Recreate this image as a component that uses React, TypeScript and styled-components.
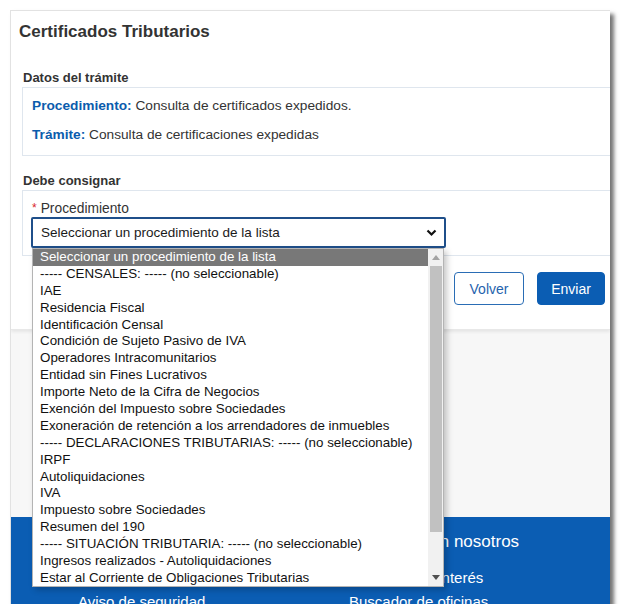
import React from "react";
import styled, { createGlobalStyle } from "styled-components";

const Global = createGlobalStyle`
  html, body { margin: 0; padding: 0; background: #ffffff; }
  body { font-family: "Liberation Sans", Arial, sans-serif; color: #333333; }
`;

const Frame = styled.div`
  position: relative;
  margin: 10px 0 0 10px;
  width: 600px;
  height: 594px;
  border-top: 1px solid #e2e2e2;
  border-left: 1px solid #e2e2e2;
  box-sizing: border-box;
  overflow: hidden;
  display: flex;
  flex-direction: column;
  background: #f7f7f7;
  box-shadow: 4px 4px 4px rgba(0, 0, 0, 0.55);
`;

const Card = styled.div`
  position: relative;
  z-index: 1;
  flex-shrink: 0;
  background: #ffffff;
  height: 319px;
  box-sizing: border-box;
  padding: 11px 5px 0 8px;
  display: flex;
  flex-direction: column;
  box-shadow: 0 2px 3px rgba(0, 0, 0, 0.07);
  border-bottom: 1px solid #e8e8e8;
`;

const Title = styled.h1`
  margin: 0;
  font-size: 17px;
  line-height: 20px;
  font-weight: bold;
  color: #333333;
`;

const Section = styled.section<{ $top: number }>`
  margin-top: ${(p) => p.$top}px;
  padding-left: 3px;
  display: flex;
  flex-direction: column;
`;

const SectionTitle = styled.h2`
  margin: 0 0 1px 1px;
  font-size: 13px;
  line-height: 16px;
  font-weight: bold;
  color: #333333;
`;

const Box = styled.div<{ $pad: string; $gap: number }>`
  border: 1px solid #dfe6ee;
  border-right: none;
  margin-right: -40px;
  padding: ${(p) => p.$pad};
  display: flex;
  flex-direction: column;
  gap: ${(p) => p.$gap}px;
  background: #ffffff;
`;

const InfoRow = styled.div`
  font-size: 13.7px;
  line-height: 16px;
  color: #333333;
`;

const InfoKey = styled.span`
  color: #0b5cad;
  font-weight: bold;
`;

const FieldLabel = styled.label`
  margin-left: 1px;
  font-size: 13.8px;
  line-height: 16px;
  color: #333333;
`;

const Required = styled.span`
  color: #d9262c;
  font-size: 12px;
  margin-right: 4px;
  vertical-align: 1px;
`;

const SelectBox = styled.div`
  width: 415px;
  height: 31px;
  box-sizing: border-box;
  border: 2px solid #1f4f8a;
  border-radius: 2px;
  display: flex;
  align-items: center;
  justify-content: space-between;
  padding: 0 7px 0 8px;
  font-size: 13.5px;
  color: #1a1a1a;
  background: #ffffff;
`;

const Buttons = styled.div`
  margin-top: 16px;
  display: flex;
  justify-content: flex-end;
  gap: 13px;
`;

const Button = styled.button<{ $primary?: boolean; $w: number }>`
  width: ${(p) => p.$w}px;
  height: 33px;
  border-radius: 4px;
  font-family: "Liberation Sans", Arial, sans-serif;
  font-size: 14px;
  cursor: pointer;
  border: 1px solid ${(p) => (p.$primary ? "#0b5db3" : "#2a6db5")};
  background: ${(p) => (p.$primary ? "#0b5db3" : "#ffffff")};
  color: ${(p) => (p.$primary ? "#ffffff" : "#1f63ad")};
`;

const Gray = styled.div`
  flex-shrink: 0;
  height: 187px;
  background: #f7f7f7;
`;

const Footer = styled.footer`
  flex: 1;
  min-height: 0;
  overflow: hidden;
  background: #0b5db3;
  display: grid;
  grid-template-columns: 271px 1fr;
  padding: 15px 0 0 67px;
  color: #ffffff;
`;

const FooterCol = styled.div`
  display: flex;
  flex-direction: column;
`;

const FooterHead = styled.div`
  font-size: 17px;
  line-height: 20px;
  height: 37px;
  white-space: nowrap;
`;

const FooterLink = styled.div`
  font-size: 15px;
  line-height: 18px;
  height: 24px;
  white-space: nowrap;
`;

const List = styled.div`
  position: absolute;
  z-index: 5;
  left: 21px;
  top: 237px;
  width: 412px;
  height: 339px;
  box-sizing: border-box;
  border: 1px solid #b4b4b4;
  background: #ffffff;
  display: flex;
  box-shadow: 3px 3px 6px rgba(0, 0, 0, 0.22);
`;

const Options = styled.div`
  flex: 1;
  display: flex;
  flex-direction: column;
`;

const Option = styled.div<{ $selected?: boolean }>`
  height: 16.9px;
  line-height: 16.9px;
  padding-left: 7px;
  font-size: 13.35px;
  white-space: nowrap;
  color: ${(p) => (p.$selected ? "#ffffff" : "#111111")};
  background: ${(p) => (p.$selected ? "#787878" : "transparent")};
`;

const Scrollbar = styled.div`
  width: 15px;
  background: #f1f1f1;
  display: flex;
  flex-direction: column;
  align-items: center;
`;

const ScrollArrow = styled.div`
  height: 17px;
  width: 100%;
  display: flex;
  align-items: center;
  justify-content: center;
`;

const Thumb = styled.div`
  width: 12px;
  height: 266px;
  background: #c1c1c1;
`;

const Spacer = styled.div`
  flex: 1;
`;

const options = [
  "Seleccionar un procedimiento de la lista",
  "----- CENSALES: ----- (no seleccionable)",
  "IAE",
  "Residencia Fiscal",
  "Identificación Censal",
  "Condición de Sujeto Pasivo de IVA",
  "Operadores Intracomunitarios",
  "Entidad sin Fines Lucrativos",
  "Importe Neto de la Cifra de Negocios",
  "Exención del Impuesto sobre Sociedades",
  "Exoneración de retención a los arrendadores de inmuebles",
  "----- DECLARACIONES TRIBUTARIAS: ----- (no seleccionable)",
  "IRPF",
  "Autoliquidaciones",
  "IVA",
  "Impuesto sobre Sociedades",
  "Resumen del 190",
  "----- SITUACIÓN TRIBUTARIA: ----- (no seleccionable)",
  "Ingresos realizados - Autoliquidaciones",
  "Estar al Corriente de Obligaciones Tributarias",
];

export default function App() {
  return (
    <>
      <Global />
      <Frame>
        <Card>
          <Title>Certificados Tributarios</Title>
          <Section $top={28}>
            <SectionTitle>Datos del trámite</SectionTitle>
            <Box $pad="10px 0 12px 9px" $gap={13}>
              <InfoRow>
                <InfoKey>Procedimiento:</InfoKey> Consulta de certificados expedidos.
              </InfoRow>
              <InfoRow>
                <InfoKey>Trámite:</InfoKey> Consulta de certificaciones expedidas
              </InfoRow>
            </Box>
          </Section>
          <Section $top={17}>
            <SectionTitle>Debe consignar</SectionTitle>
            <Box $pad="9px 0 7px 8px" $gap={0}>
              <FieldLabel>
                <Required>*</Required>Procedimiento
              </FieldLabel>
              <SelectBox>
                <span>Seleccionar un procedimiento de la lista</span>
                <svg width="11" height="8" viewBox="0 0 11 8">
                  <polyline points="1.5,1.5 5.5,5.5 9.5,1.5" fill="none" stroke="#111" strokeWidth="2.2" />
                </svg>
              </SelectBox>
            </Box>
          </Section>
          <Buttons>
            <Button $w={70}>Volver</Button>
            <Button $w={68} $primary>
              Enviar
            </Button>
          </Buttons>
        </Card>
        <Gray />
        <Footer>
          <FooterCol>
            <FooterHead />
            <FooterLink />
            <FooterLink>Aviso de seguridad</FooterLink>
          </FooterCol>
          <FooterCol>
            <FooterHead>Contacte con nosotros</FooterHead>
            <FooterLink>Teléfonos de interés</FooterLink>
            <FooterLink>Buscador de oficinas</FooterLink>
          </FooterCol>
        </Footer>
        <List>
          <Options>
            {options.map((o, i) => (
              <Option key={o} $selected={i === 0}>
                {o}
              </Option>
            ))}
          </Options>
          <Scrollbar>
            <ScrollArrow>
              <svg width="8" height="5" viewBox="0 0 8 5">
                <polygon points="0,5 4,0 8,5" fill="#a3a3a3" />
              </svg>
            </ScrollArrow>
            <Thumb />
            <Spacer />
            <ScrollArrow>
              <svg width="8" height="5" viewBox="0 0 8 5">
                <polygon points="0,0 8,0 4,5" fill="#505050" />
              </svg>
            </ScrollArrow>
          </Scrollbar>
        </List>
      </Frame>
    </>
  );
}
